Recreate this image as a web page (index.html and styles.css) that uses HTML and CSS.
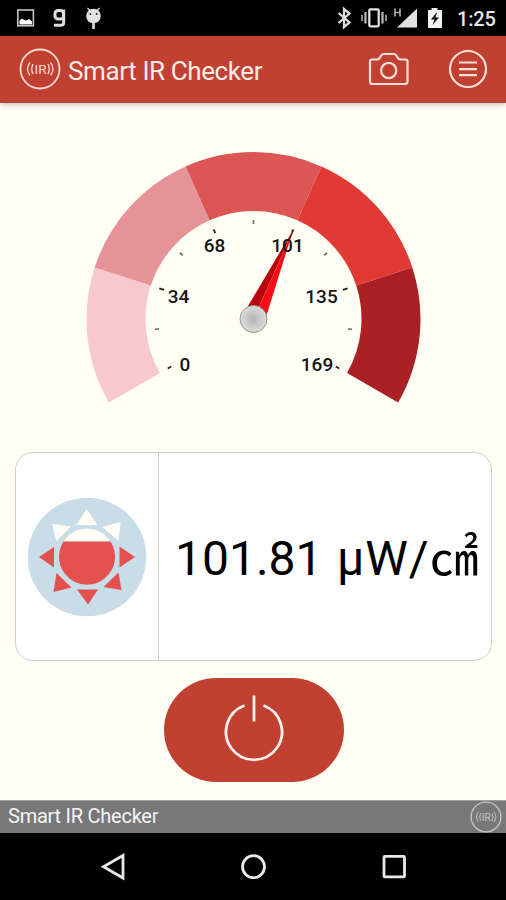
FILE: index.html
```html
<!DOCTYPE html>
<html lang="en">
<head>
    <meta charset="UTF-8">
    <meta name="viewport" content="width=device-width, initial-scale=1.0">
    <title>Smart IR Checker</title>
    <link rel="stylesheet" href="styles.css">
</head>
<body>
    <div id="app">

        <!-- System status bar -->
        <div class="status-bar">
            <svg class="status-left" width="110" height="36" viewBox="0 0 110 36" aria-hidden="true">
                <rect x="17.8" y="10" width="15.6" height="15.8" fill="none" stroke="#c4c4c4" stroke-width="1.6"/>
                <path d="M19.500 24.500v-4l2.500-2 3 2 2.500-.5 1.500-1 3 2.500v3z" fill="#fff"/>
                <g fill="none" stroke="#ddd" stroke-width="3">
                    <rect x="55" y="10.500" width="8.500" height="8.500" rx="3"/>
                    <path d="M63.700 9.500v13q0 2.800-3 2.800h-6.700"/>
                </g>
                <path d="M87.500 8l3 3M99.500 8l-3 3" stroke="#ddd" stroke-width="1.3"/>
                <circle cx="93.500" cy="16" r="7.300" fill="#e2e2e2"/>
                <path d="M93.500 22v7" stroke="#ddd" stroke-width="2.600"/>
                <circle cx="90.300" cy="14" r="1" fill="#333"/>
                <circle cx="96.700" cy="14" r="1" fill="#333"/>
            </svg>
            <svg class="status-right" width="120" height="36" viewBox="330 0 120 36" aria-hidden="true">
                <path d="M338.500 13l11 9.500-5.500 4.500V9l5.500 4.500-11 9.500" fill="none" stroke="#ddd" stroke-width="2.3"/>
                <rect x="369.300" y="9.300" width="9.400" height="17" rx="1" fill="none" stroke="#e4e4e4" stroke-width="2.200"/>
                <path d="M365.500 12v11.500M382.500 12v11.500" stroke="#bbb" stroke-width="2.200"/>
                <path d="M362 15v6M386 15v6" stroke="#999" stroke-width="1.800"/>
                <path d="M395 8.500v8M400 8.500v8M395 12.500h5" stroke="#aaa" stroke-width="1.700" fill="none"/>
                <path d="M417 8.500V27.500H397z" fill="#e0e0e0"/>
                <path d="M428 10h3.500V8h6v2h4.500v18h-14z" fill="#f2f2f2"/>
                <path d="M437 12l-6 7.500h3.500l-2 5.500 6.500-7.500h-3.500z" fill="#111"/>
            </svg>
            <span class="clock">1:25</span>
        </div>

        <header class="app-header">
            <svg class="logo" width="42" height="42" viewBox="-21 -21 42 42" aria-hidden="true">
                <circle r="19.500"/>
                <text x="0.500" y="4.800" text-anchor="middle">IR</text>
                <path d="M-7-5q-2.500 5 0 10M-10-6.500q-5 6.500 0 13M8-5q2.500 5 0 10M10.500-6.500q5 6.500 0 13"/>
            </svg>
            <h1>Smart IR Checker</h1>
            <button class="icon-btn camera-btn" aria-label="Camera">
                <svg width="42" height="36" viewBox="0 0 42 36">
                    <path d="M4 8.500h5q2 0 3-2l1-1.800q1-1.700 3-1.700h9.500q2 0 3 1.700l1 1.800q1 2 3 2h5q2 0 2 2v20q0 2.500-2.500 2.500H4.500Q2 33 2 30.500v-20q0-2 2-2z"/>
                    <circle cx="20.700" cy="19.500" r="7.600"/>
                </svg>
            </button>
            <button class="icon-btn menu-btn" aria-label="Menu">
                <svg width="40" height="40" viewBox="-20 -20 40 40">
                    <circle r="18"/>
                    <path d="M-9-6.500H9M-9 .2H9M-9 6.200H9"/>
                </svg>
            </button>
        </header>

        <main>
            <!-- Gauge, origin at the needle hub, 48 degrees per band -->
            <svg class="gauge" width="340" height="256" viewBox="-170.500 -169 340 256" role="img" aria-label="IR level">
                <defs>
                    <radialGradient id="hub">
                        <stop offset="0" stop-color="#b4b4b4"/>
                        <stop offset="1" stop-color="#dcdcdc"/>
                    </radialGradient>
                </defs>
                <path fill="#f7c9cf" d="M-144.600 83.500A167 167 0 0 1-158.800-51.600L-102.700-33.400A108 108 0 0 0-93.500 54z"/>
                <path fill="#e59396" d="M-158.800-51.600A167 167 0 0 1-67.900-152.600L-43.900-98.700A108 108 0 0 0-102.700-33.400z"/>
                <path fill="#dc5656" d="M-67.900-152.600A167 167 0 0 1 67.900-152.600L43.900-98.700A108 108 0 0 0-43.900-98.700z"/>
                <path fill="#e13a35" d="M67.900-152.600A167 167 0 0 1 158.800-51.600L102.700-33.400A108 108 0 0 0 43.900-98.700z"/>
                <path fill="#ab2024" d="M158.800-51.600A167 167 0 0 1 144.600 83.500L93.500 54A108 108 0 0 0 102.700-33.400z"/>
                <g class="ticks">
                    <path class="major" d="M0-95v-4" transform="rotate(-120)"/>
                    <path d="M0-95v-4" transform="rotate(-96)"/>
                    <path class="major" d="M0-94v-5" transform="rotate(-72)"/>
                    <path d="M0-95v-4" transform="rotate(-48)"/>
                    <path class="major" d="M0-94v-4" transform="rotate(-24)"/>
                    <path d="M0-95v-4"/>
                    <path d="M0-95v-4" transform="rotate(48)"/>
                    <path class="major" d="M0-94v-5" transform="rotate(72)"/>
                    <path d="M0-95v-4" transform="rotate(96)"/>
                    <path class="major" d="M0-95v-4" transform="rotate(120)"/>
                </g>
                <g transform="rotate(24)">
                    <path fill="#b8040c" d="M0-98L-10.500-8H0z"/>
                    <path fill="#fb0d18" d="M0-98L10.500-8H0z"/>
                    <path d="M0-95v-3" stroke="#222" stroke-width="1.8"/>
                </g>
                <g class="scale">
                    <text x="-68.500" y="51.500">0</text>
                    <text x="-75" y="-16">34</text>
                    <text x="-39" y="-67">68</text>
                    <text x="34" y="-67">101</text>
                    <text x="68" y="-16">135</text>
                    <text x="63.500" y="51.500">169</text>
                </g>
                <path d="M36-80L39-87" stroke="#8c1014" stroke-width="1.5"/>
                <circle r="13.500" fill="url(#hub)" stroke="#94948c" stroke-width="1"/>
            </svg>

            <section class="reading">
                <div class="reading-icon">
                    <svg width="120" height="120" viewBox="-60 -60 120 120" aria-hidden="true">
                        <circle r="59.300" fill="#c9dde8"/>
                        <g fill="#fffff6">
                            <path d="M-.500-48L10.500-32H-10.500z"/>
                            <path d="M-35-33L-16-30.500-30.500-16z"/>
                            <path d="M33.500-35L31.500-16 15.500-30z"/>
                            <path d="M-23.500-15.500A28 28 0 0 1 23.500-15.500z"/>
                        </g>
                        <g fill="#e4504d">
                            <path d="M-23.500-15.500A28 28 0 1 0 23.500-15.500z"/>
                            <path d="M-48 0L-33-10V10.500z"/>
                            <path d="M48 0L32.500-10.500V10.500z"/>
                            <path d="M-30.500 16L-15.500 30.500-33.500 35z"/>
                            <path d="M31.500 15.500L34.500 33 16.500 30z"/>
                            <path d="M1 47.500L-10 32.500H11z"/>
                        </g>
                    </svg>
                </div>
                <div class="reading-value">101.81 <span class="prefix">µW/</span><span class="unit">㎠</span></div>
            </section>

            <button class="power-btn" aria-label="Power">
                <svg width="64" height="70" viewBox="0 0 64 70">
                    <path d="M22.500 10.500A28 28 0 1 0 41.500 10.500M32 0.500V26.500"/>
                </svg>
            </button>
        </main>

        <footer class="app-footer">
            <span>Smart IR Checker</span>
            <svg class="logo logo-small" width="32" height="32" viewBox="-21 -21 42 42" aria-hidden="true">
                <circle r="19.500"/>
                <text x="0.500" y="4.800" text-anchor="middle">IR</text>
                <path d="M-7-5q-2.500 5 0 10M-10-6.500q-5 6.500 0 13M8-5q2.500 5 0 10M10.500-6.500q5 6.500 0 13"/>
            </svg>
        </footer>

        <!-- System navigation -->
        <nav class="nav-bar">
            <svg width="28" height="30" viewBox="0 0 28 30"><path d="M24 3.500V26L4.500 14.700z"/></svg>
            <svg width="28" height="30" viewBox="0 0 28 30"><circle cx="14.500" cy="14.700" r="11"/></svg>
            <svg width="28" height="30" viewBox="0 0 28 30"><rect x="4" y="4.400" width="20.500" height="20.500" rx="1"/></svg>
        </nav>
    </div>
</body>
</html>
```

FILE: styles.css
```css
/* Reset and base styles */
* {
    margin: 0;
    padding: 0;
    box-sizing: border-box;
}

body {
    font-family: Roboto, sans-serif;
    background-color: #fffff6;
    overflow: hidden;
}

svg {
    display: block;
    flex: none;
}

button {
    border: none;
    background: none;
    cursor: pointer;
}

#app {
    display: flex;
    flex-direction: column;
    width: 506px;
    height: 900px;
}

/* Status bar */
.status-bar {
    display: flex;
    align-items: center;
    height: 36px;
    background-color: #000;
}

.status-right {
    margin-left: auto;
}

.clock {
    width: 56px;
    padding: 2px 0 0 7px;
    font-size: 20px;
    font-weight: 500;
    letter-spacing: -0.2px;
    color: #e4e4e4;
}

/* Header */
.app-header {
    display: flex;
    align-items: center;
    height: 67px;
    padding: 0 18px 0 19px;
    background-color: #c04132;
    border-bottom: 1px solid #a94a3c;
    box-shadow: 0 1px 6px rgba(0, 0, 0, 0.3);
    z-index: 1;
}

.app-header h1 {
    margin-left: 7px;
    font-size: 26px;
    font-weight: 400;
    letter-spacing: -0.4px;
    color: #ffeae6;
    line-height: 1;
    padding-top: 3px;
}

.logo circle,
.logo path {
    fill: none;
    stroke: #ffd9d0;
    stroke-width: 1.8;
}

.logo path {
    stroke-width: 1.3;
}

.logo text {
    font-size: 13.5px;
    fill: #ffd9d0;
}

.icon-btn path,
.icon-btn circle {
    fill: none;
    stroke: #ffe0d8;
    stroke-width: 2.2;
}

.camera-btn {
    margin-left: auto;
}

.menu-btn {
    margin-left: 38px;
}

/* Main area */
main {
    display: flex;
    flex: 1;
    flex-direction: column;
    align-items: center;
    padding-top: 47px;
}

.ticks path {
    stroke: #777;
    stroke-width: 1.8;
}

.ticks .major {
    stroke: #222;
}

.scale {
    font-size: 19px;
    font-weight: 500;
    text-anchor: middle;
    fill: #151515;
}

/* Measured value */
.reading {
    display: flex;
    width: 477px;
    height: 209px;
    margin-top: 46px;
    margin-left: 1px;
    background-color: #fff;
    border: 1.5px solid #cfcfcf;
    border-radius: 18px;
}

.reading-icon {
    display: flex;
    align-items: center;
    justify-content: center;
    width: 143px;
    border-right: 1.5px solid #d2d2d2;
}

.reading-value {
    padding: 1px 0 0 16px;
    font-size: 48px;
    line-height: 210px;
    white-space: pre;
    color: #000;
}

.prefix {
    margin-left: 2.5px;
    letter-spacing: 1px;
}

.unit {
    font-family: "Noto Sans CJK JP", sans-serif;
    font-size: 49px;
    line-height: 1;
}

.power-btn {
    display: flex;
    align-items: center;
    justify-content: center;
    width: 180px;
    height: 104px;
    margin-top: 17px;
    margin-left: 1px;
    border-radius: 52px;
    background-color: #c04132;
}

.power-btn path {
    fill: none;
    stroke: #fff0ec;
    stroke-width: 2.8;
}

/* Footer */
.app-footer {
    display: flex;
    justify-content: space-between;
    height: 33px;
    padding: 0 4px 0 8px;
    background-color: #787878;
    border-top: 1px solid #a2a29c;
}

.app-footer span {
    font-size: 20px;
    line-height: 30px;
    letter-spacing: -0.25px;
    color: #f4f4f4;
}

.logo-small circle,
.logo-small path {
    stroke: #c4c4c4;
}

.logo-small text {
    fill: #c4c4c4;
}

/* Navigation bar */
.nav-bar {
    display: flex;
    justify-content: center;
    gap: 112.5px;
    height: 67px;
    padding-top: 19px;
    background-color: #000;
}

.nav-bar path,
.nav-bar circle,
.nav-bar rect {
    fill: none;
    stroke: #e9e9e9;
    stroke-width: 2.8;
}
```
